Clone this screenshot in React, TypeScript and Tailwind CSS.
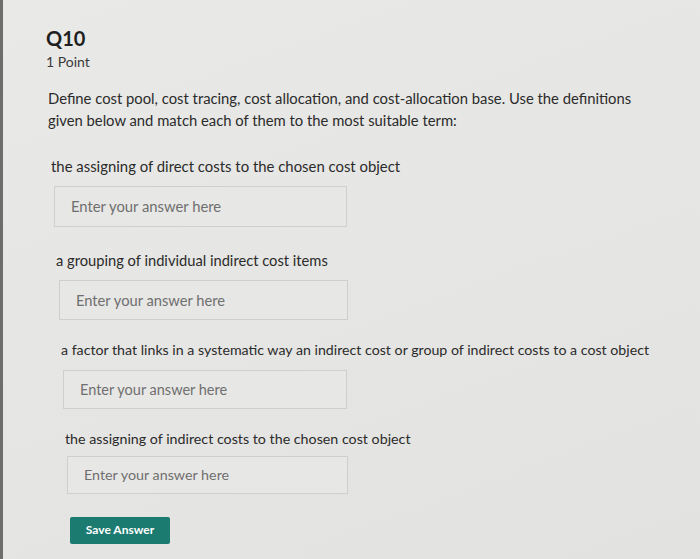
import React from "react";

const items = [
  {
    label: "the assigning of direct costs to the chosen cost object",
    labelClass: "ml-[48px] mt-[25px] text-[14.9px]",
    boxClass: "ml-[51px] mt-[10px] w-[293px] h-[41px] text-[14.8px]",
  },
  {
    label: "a grouping of individual indirect cost items",
    labelClass: "ml-[53px] mt-[23px] text-[14.7px]",
    boxClass: "ml-[56px] mt-[10px] w-[289px] h-[40px] text-[14.7px]",
  },
  {
    label:
      "a factor that links in a systematic way an indirect cost or group of indirect costs to a cost object",
    labelClass: "ml-[58px] mt-[20px] text-[14.2px]",
    boxClass: "ml-[60px] mt-[10px] w-[284px] h-[39px] text-[14.5px]",
  },
  {
    label: "the assigning of indirect costs to the chosen cost object",
    labelClass: "ml-[62px] mt-[20px] text-[14.25px]",
    boxClass: "ml-[64px] mt-[7px] w-[281px] h-[38px] text-[14.3px]",
  },
];

export default function App() {
  return (
    <div className="w-[700px] h-[559px] flex bg-[linear-gradient(160deg,#e9e9e7,#e2e2e0)] font-['Lato','Liberation_Sans',sans-serif] text-[#2b2b2b] overflow-hidden">
      <div className="w-[3px] bg-[#6d6d6b]" />
      <div className="flex-1 flex flex-col">
        <div className="ml-[43px] mt-[26px] text-[20px] font-bold leading-[24px] text-[#1f1f1f]">Q10</div>
        <div className="ml-[43px] mt-[2px] text-[14px] leading-[20px] text-[#3a3a3a]">1 Point</div>
        <p className="ml-[45px] mt-[15px] w-[620px] text-[14.8px] leading-[22px]">
          Define cost pool, cost tracing, cost allocation, and cost-allocation base. Use the definitions
          given below and match each of them to the most suitable term:
        </p>
        {items.map((it, i) => (
          <div key={i} className="flex flex-col">
            <div className={`${it.labelClass} leading-[20px] whitespace-nowrap`}>{it.label}</div>
            <div
              className={`${it.boxClass} border border-[#cfcfcd] bg-[#e7e7e5] flex items-center pl-[16px] text-[#6f6f6f]`}
            >
              Enter your answer here
            </div>
          </div>
        ))}
        <div className="ml-[67px] mt-[22px]">
          <button className="w-[100px] h-[27px] bg-[#1b7b70] text-white text-[12px] font-bold rounded-[2px]">
            Save Answer
          </button>
        </div>
      </div>
    </div>
  );
}
